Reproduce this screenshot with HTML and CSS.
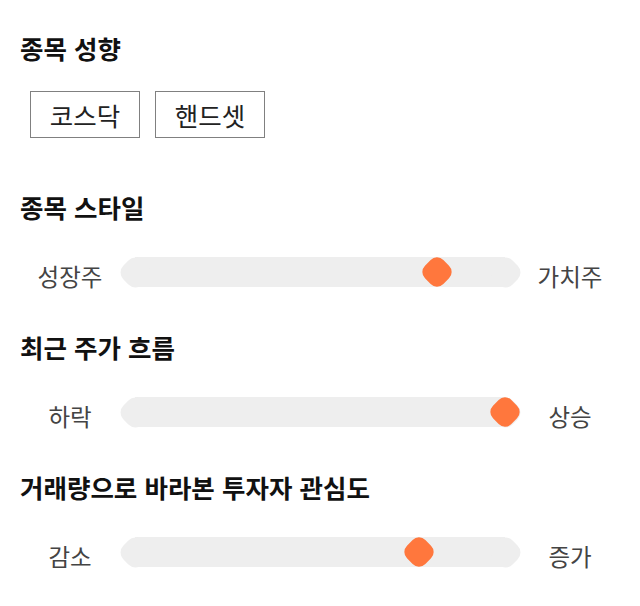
FILE: index.html
```html
<!DOCTYPE html>
<html lang="ko">

<head>
  <meta charset="UTF-8">
  <meta name="viewport" content="width=device-width, initial-scale=1.0">
  <title>종목 성향</title>
  <link rel="stylesheet" href="styles.css">
</head>

<body>
  <div class="page">
    <!-- 종목 성향 -->
    <div class="section">
      <h2 class="title">종목 성향</h2>
      <div class="chips">
        <span class="chip">코스닥</span>
        <span class="chip">핸드셋</span>
      </div>
    </div>

    <!-- 슬라이더 -->
    <div class="section">
      <h2 class="title">종목 스타일</h2>
      <div class="range">
        <span class="label">성장주</span>
        <div class="track"><i class="thumb" style="--v: 0.816"></i></div>
        <span class="label">가치주</span>
      </div>
    </div>

    <div class="section">
      <h2 class="title">최근 주가 흐름</h2>
      <div class="range">
        <span class="label">하락</span>
        <div class="track"><i class="thumb" style="--v: 1"></i></div>
        <span class="label">상승</span>
      </div>
    </div>

    <div class="section">
      <h2 class="title">거래량으로 바라본 투자자 관심도</h2>
      <div class="range">
        <span class="label">감소</span>
        <div class="track"><i class="thumb" style="--v: 0.768"></i></div>
        <span class="label">증가</span>
      </div>
    </div>
  </div>
</body>

</html>
```

FILE: styles.css
```css
* {
  padding: 0;
  margin: 0;
  box-sizing: border-box;
}

body {
  font-family: "Noto Sans CJK KR", "Noto Sans", sans-serif;
  color: #111;
  background-color: #fff;
}

.page {
  padding: 30px 20px;
}

.title {
  font-size: 25.5px;
  line-height: 36px;
  font-weight: bold;
  color: #111;
}

.chips {
  display: flex;
  gap: 15px;
  margin: 25px 0 0 10px;
}

.chip {
  width: 110px;
  height: 47px;
  border: solid 1px #808080;
  font-size: 25.5px;
  line-height: 45px;
  text-align: center;
  color: #222;
}

.section + .section {
  margin-top: 51px;
}

.section + .section + .section {
  margin-top: 38px;
}

.range {
  display: flex;
  align-items: flex-start;
  margin-top: 32px;
}

.label {
  width: 100px;
  margin-top: 4px;
  font-size: 23.5px;
  line-height: 30px;
  text-align: center;
  color: #444;
}

.track {
  position: relative;
  width: 370px;
  height: 30px;
  margin: 0 15px;
  background-color: #eee;
}

.track::before,
.track::after {
  content: '';
  position: absolute;
  top: 50%;
  width: 27px;
  height: 27px;
  margin: -13.5px 0 0 -13.5px;
  border-radius: 10px;
  background-color: #eee;
  transform: rotate(45deg);
}

.track::before {
  left: 0;
}

.track::after {
  left: 100%;
}

.thumb {
  position: absolute;
  z-index: 1;
  top: 50%;
  left: calc(var(--v) * 100%);
  width: 26px;
  height: 26px;
  margin: -13px 0 0 -13px;
  border-radius: 9px;
  background-color: #ff773d;
  transform: rotate(45deg);
}
```
